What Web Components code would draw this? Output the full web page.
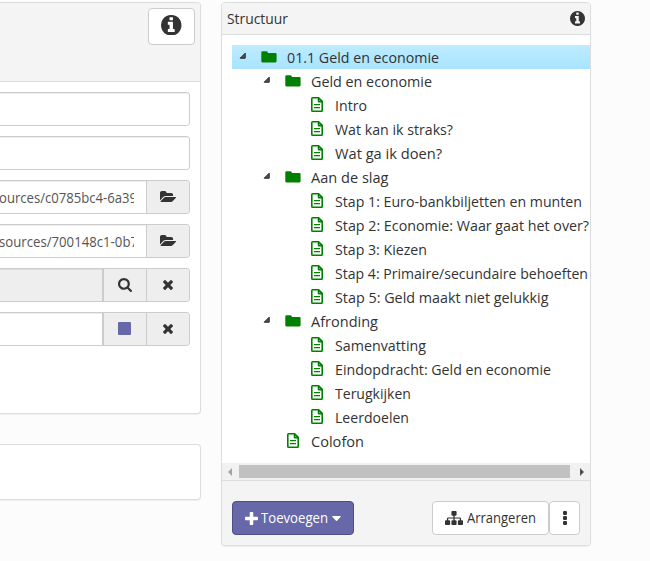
<!DOCTYPE html>
<html lang="nl">
<head>
<meta charset="utf-8">
<title>Structuur</title>
<style>
html,body{margin:0;height:100%;overflow:hidden}
body{background:#fcfcfc;font:14px/20px "Open Sans","Noto Sans",sans-serif;color:#333}
</style>
</head>
<body>
<editor-page></editor-page>
<script>
const ICONS = {
  info: ['128 128 1536 1536', '<path d="M1152 1376v-160q0-14-9-23t-23-9h-96v-512q0-14-9-23t-23-9h-320q-14 0-23 9t-9 23v160q0 14 9 23t23 9h96v320h-96q-14 0-23 9t-9 23v160q0 14 9 23t23 9h448q14 0 23-9t9-23zm-128-896v-160q0-14-9-23t-23-9h-192q-14 0-23 9t-9 23v160q0 14 9 23t23 9h192q14 0 23-9t9-23zm640 416q0 209-103 385.5t-279.5 279.5-385.5 103-385.5-103-279.5-279.5-103-385.5 103-385.5 279.5-279.5 385.5-103 385.5 103 279.5 279.5 103 385.5z"/>'],
  open: ['0 128 1879 1408', '<path d="M1879 952q0 31-31 66l-336 396q-43 51-120.500 86.500t-143.500 35.500h-1088q-34 0-60.500-13t-26.500-43q0-31 31-66l336-396q43-51 120.500-86.500t143.500-35.500h1088q34 0 60.500 13t26.500 43zm-343-344v160h-832q-94 0-197 47.500t-164 119.500l-337 396-5 6q0-4-.5-12.500t-.5-12.500v-960q0-92 66-158t158-66h320q92 0 158 66t66 158v32h544q92 0 158 66t66 158z"/>'],
  search: ['64 128 1664 1664', '<path d="M1216 832q0-185-131.500-316.500t-316.500-131.500-316.500 131.500-131.500 316.500 131.500 316.500 316.500 131.500 316.500-131.500 131.500-316.500zm512 832q0 52-38 90t-90 38q-54 0-90-38l-343-342q-179 124-399 124-143 0-273.500-55.500t-225-150-150-225-55.500-273.500 55.500-273.500 150-225 225-150 273.500-55.500 273.500 55.500 225 150 150 225 55.500 273.500q0 220-124 399l343 343q37 37 37 90z"/>'],
  times: ['302 366 1188 1188', '<path d="M1490 1322q0 40-28 68l-136 136q-28 28-68 28t-68-28l-294-294-294 294q-28 28-68 28t-68-28l-136-136q-28-28-28-68t28-68l294-294-294-294q-28-28-28-68t28-68l136-136q28-28 68-28t68 28l294 294 294-294q28-28 68-28t68 28l136 136q28 28 28 68t-28 68l-294 294 294 294q28 28 28 68z"/>'],
  square: ['0 0 13 13', '<rect width="13" height="13" rx="1"/>'],
  folder: ['0 0 16 12', '<path d="M.3 1.400Q.3.300 1.400.300H5.400Q6.300.300 6.600 1.100L6.900 2H14.400Q15.600 2 15.600 3V10.300Q15.600 11.400 14.500 11.400H1.400Q.3 11.400.3 10.300Z"/>'],
  file: ['0 0 12 15', '<path fill="none" stroke="currentColor" stroke-width="1.600" stroke-linejoin="round" d="M1.700.8H7.600L11.200 4.400V13.400Q11.200 14.200 10.400 14.200H1.700Q.8 14.200.8 13.400V1.600Q.8.8 1.700.8ZM7.500 1V4.600H11"/><path d="M3 7h6v1.300H3zM3 10h6v1.300H3z"/>'],
  twist: ['0 0 7 7', '<path fill="#555" stroke="#222" d="M6.200 1.200V6.200H1.200Z"/>'],
  plus: ['192 128 1408 1408', '<path d="M1600 736v192q0 40-28 68t-68 28h-416v416q0 40-28 68t-68 28h-192q-40 0-68-28t-28-68v-416h-416q-40 0-68-28t-28-68v-192q0-40 28-68t68-28h416v-416q0-40 28-68t68-28h192q40 0 68 28t28 68v416h416q40 0 68 28t28 68z"/>'],
  caret: ['0 0 9 5', '<path d="M.5 0H8.500Q9 .3 8.700.7L5 4.700Q4.500 5.100 4 4.700L.3.700Q0 .3.500 0Z"/>'],
  sitemap: ['0 128 1792 1536', '<path d="M1792 1248v320q0 40-28 68t-68 28h-320q-40 0-68-28t-28-68v-320q0-40 28-68t68-28h96v-192h-512v192h96q40 0 68 28t28 68v320q0 40-28 68t-68 28h-320q-40 0-68-28t-28-68v-320q0-40 28-68t68-28h96v-192h-512v192h96q40 0 68 28t28 68v320q0 40-28 68t-68 28h-320q-40 0-68-28t-28-68v-320q0-40 28-68t68-28h96v-192q0-52 38-90t90-38h512v-192h-96q-40 0-68-28t-28-68v-320q0-40 28-68t68-28h320q40 0 68 28t28 68v320q0 40-28 68t-68 28h-96v192h512q52 0 90 38t38 90v192h96q40 0 68 28t28 68z"/>'],
  dots: ['0 0 4 14', '<rect width="4" height="4" rx="1.300"/><rect y="5" width="4" height="4" rx="1.300"/><rect y="10" width="4" height="4" rx="1.300"/>'],
  left: ['0 0 4 8', '<path d="M4 0V8L0 4Z"/>'],
  right: ['0 0 4 8', '<path d="M0 0V8L4 4Z"/>']
};
const define = (name, html, ready) => customElements.define(name, class extends HTMLElement {
  connectedCallback() {
    if (this.shadowRoot) return;
    this.attachShadow({mode: 'open'}).innerHTML = typeof html === 'function' ? html(this) : html;
    if (ready) ready(this);
  }
});

define('ui-icon', el => {
  const [box, shape] = ICONS[el.getAttribute('name')];
  return `<style>:host{display:block;flex:none;width:${el.getAttribute('w')}px;height:${el.getAttribute('h')}px}svg{display:block;width:100%;height:100%;fill:currentColor}</style>
  <svg viewBox="${box}" preserveAspectRatio="none">${shape}</svg>`;
});

/* A single line of text condensed horizontally to an exact width. */
define('fit-text', `<style>:host{display:block;flex:none;white-space:pre}span{display:inline-block;transform-origin:0 50%}</style><span></span>`, el => {
  const span = el.shadowRoot.querySelector('span'), w = +el.getAttribute('w');
  span.textContent = el.getAttribute('text');
  const natural = span.getBoundingClientRect().width;
  el.style.width = w + 'px';
  span.style.transform = `scaleX(${w / natural})`;
});

define('ui-panel', `<style>
  :host{display:flex;flex-direction:column;box-sizing:border-box;background:#fff;border:1px solid #ddd;border-radius:4px;box-shadow:0 1px 1px rgba(0,0,0,.05);overflow:hidden}
  </style><slot name="head"></slot><slot></slot><slot name="foot"></slot>`);

define('ui-button', `<style>
  :host{display:flex;box-sizing:border-box;height:34px;align-items:center;justify-content:center;background:#fff;border:1px solid #ccc;border-radius:4px}
  :host([primary]){background:#6668a9;border-color:#4c4e87;color:#fff}
  </style><slot></slot>`);

define('form-row', el => `<style>
  :host{display:flex;box-sizing:border-box;height:34px;border:1px solid #ccc;border-left:0;border-radius:0 4px 4px 0;background:#fff;overflow:hidden;color:#555}
  .in{flex:1;min-width:0;box-shadow:inset 0 1px 1px rgba(0,0,0,.075);padding-right:12px;background:${el.hasAttribute('disabled') ? '#eee' : '#fff'}}
  .clip{overflow:hidden;height:32px;line-height:33px}
  </style><div class="in"><div class="clip"><slot></slot></div></div><slot name="add"></slot>`);

define('row-addon', el => `<style>
  :host{display:flex;box-sizing:border-box;width:43px;border-left:1px solid #ccc;background:#eee;align-items:center;justify-content:center;color:#333;padding:0 1px 1px 0}
  :host([wide]){width:44px;border-left-width:2px}
  :host([violet]){color:#6668a9}
  </style><ui-icon name="${el.getAttribute('icon')}" w="${el.getAttribute('w')}" h="${el.getAttribute('h')}"></ui-icon>`);

define('tree-row', el => {
  const lvl = +el.getAttribute('level'), folder = el.hasAttribute('folder');
  return `<style>
  :host{display:flex;height:24px;align-items:center;padding-left:${lvl * 24}px;font-size:15px;line-height:24px}
  :host([selected]){background:linear-gradient(#beebff,#a8e4ff)}
  .t{width:29px;height:24px;display:flex;flex:none}
  .t ui-icon{margin:7px 0 0 7px}
  .i{width:26px;height:24px;flex:none;color:#008000}
  .i ui-icon{margin:${folder ? '6px 0 0 0' : '4px 0 0 2.200px'}}
  </style><div class="t">${folder ? '<ui-icon name="twist" w="7" h="7"></ui-icon>' : ''}</div>
  <div class="i"><ui-icon name="${folder ? 'folder' : 'file'}" ${folder ? 'w="16" h="12"' : 'w="12" h="15"'}></ui-icon></div>
  <fit-text text="${el.getAttribute('label')}" w="${el.getAttribute('w')}"></fit-text>`;
});

const ROWS = [
  [0,'01.1 Geld en economie',152,1],[1,'Geld en economie',121,1],[2,'Intro',32],[2,'Wat kan ik straks?',118],[2,'Wat ga ik doen?',107],
  [1,'Aan de slag',77.5,1],[2,'Stap 1: Euro-bankbiljetten en munten',247],[2,'Stap 2: Economie: Waar gaat het over?',254],[2,'Stap 3: Kiezen',92],
  [2,'Stap 4: Primaire/secundaire behoeften',253],[2,'Stap 5: Geld maakt niet gelukkig',213.5],[1,'Afronding',67,1],[2,'Samenvatting',91],
  [2,'Eindopdracht: Geld en economie',216],[2,'Terugkijken',76],[2,'Leerdoelen',74],[1,'Colofon',53]
];
define('structure-tree', `<style>
  :host{display:block;height:428px;flex:none;padding:10px 0 0 10px;box-sizing:border-box;overflow:hidden}
  </style>` + ROWS.map(([l, t, w, f], i) => `<tree-row level="${l}" label="${t}" w="${w}"${f ? ' folder' : ''}${i ? '' : ' selected'}></tree-row>`).join(''));

define('scroll-strip', `<style>
  :host{display:flex;height:17px;flex:none;background:#f1f1f1;align-items:center;padding:0 6px;gap:7px}
  .thumb{flex:1;height:13px;background:#c1c1c1}
  .l{color:#a3a3a3}.r{color:#505050;margin-left:3px}
  </style><ui-icon class="l" name="left" w="4" h="8"></ui-icon><div class="thumb"></div><ui-icon class="r" name="right" w="4" h="8"></ui-icon>`);

define('editor-page', `<style>
  :host{display:flex;gap:20px;padding-top:2px;align-items:flex-start}
  .left{width:201px;display:flex;flex-direction:column;gap:30px}
  .left ui-panel{border-left:0;border-radius:0 4px 4px 0}
  .form{height:412px}.empty{height:56px}
  .lh{flex:none;background:#f4f4f4;border-bottom:1px solid #ddd;display:flex;justify-content:flex-end;padding:5px 5px 0 0;height:73px}
  .lh ui-button{width:47px;height:37px}
  .lh ui-icon{margin-bottom:3px}
  .rows{display:flex;flex-direction:column;gap:10px;padding:10px 10px 0 0}
  .right{width:370px;height:544px}
  .rh{height:31px;flex:none;background:#f4f4f4;border-bottom:1px solid #ddd;display:flex;align-items:center;justify-content:space-between;padding:0 5px;font-size:15px}
  .rh fit-text{margin-bottom:2px}
  .foot{flex:1;background:#f4f4f4;border-top:1px solid #ddd;display:flex;align-items:flex-start;padding:20px 10px 0}
  .add{width:122px;gap:3px}
  .add ui-icon:last-child{margin-left:1px}
  .arr{width:117px;gap:3.500px;margin-left:auto}
  .more{width:31px}
  </style>
  <div class="left">
    <ui-panel class="form">
      <div class="lh" slot="head"><ui-button><ui-icon name="info" w="20.500" h="20.500"></ui-icon></ui-button></div>
      <div class="rows">
        <form-row></form-row>
        <form-row></form-row>
        <form-row><fit-text text="ources/c0785bc4-6a39" w="138" style="margin-left:-1px"></fit-text><row-addon slot="add" icon="open" w="16" h="11"></row-addon></form-row>
        <form-row><fit-text text="sources/700148c1-0b7" w="139" style="margin-left:-1px"></fit-text><row-addon slot="add" icon="open" w="16" h="11"></row-addon></form-row>
        <form-row disabled><row-addon slot="add" wide icon="search" w="14" h="14"></row-addon><row-addon slot="add" icon="times" w="10" h="10"></row-addon></form-row>
        <form-row><row-addon slot="add" wide violet icon="square" w="13" h="13"></row-addon><row-addon slot="add" icon="times" w="10" h="10"></row-addon></form-row>
      </div>
    </ui-panel>
    <ui-panel class="empty"></ui-panel>
  </div>
  <ui-panel class="right">
    <div class="rh" slot="head"><fit-text text="Structuur" w="61"></fit-text><ui-icon name="info" w="15" h="15"></ui-icon></div>
    <structure-tree></structure-tree>
    <scroll-strip></scroll-strip>
    <div class="foot" slot="foot">
      <ui-button primary class="add"><ui-icon name="plus" w="13" h="13"></ui-icon><fit-text text="Toevoegen" w="67"></fit-text><ui-icon name="caret" w="9" h="5"></ui-icon></ui-button>
      <ui-button class="arr"><ui-icon name="sitemap" w="18" h="14"></ui-icon><fit-text text="Arrangeren" w="69"></fit-text></ui-button>
      <ui-button class="more"><ui-icon name="dots" w="4" h="14"></ui-icon></ui-button>
    </div>
  </ui-panel>`);
</script>
</body>
</html>
